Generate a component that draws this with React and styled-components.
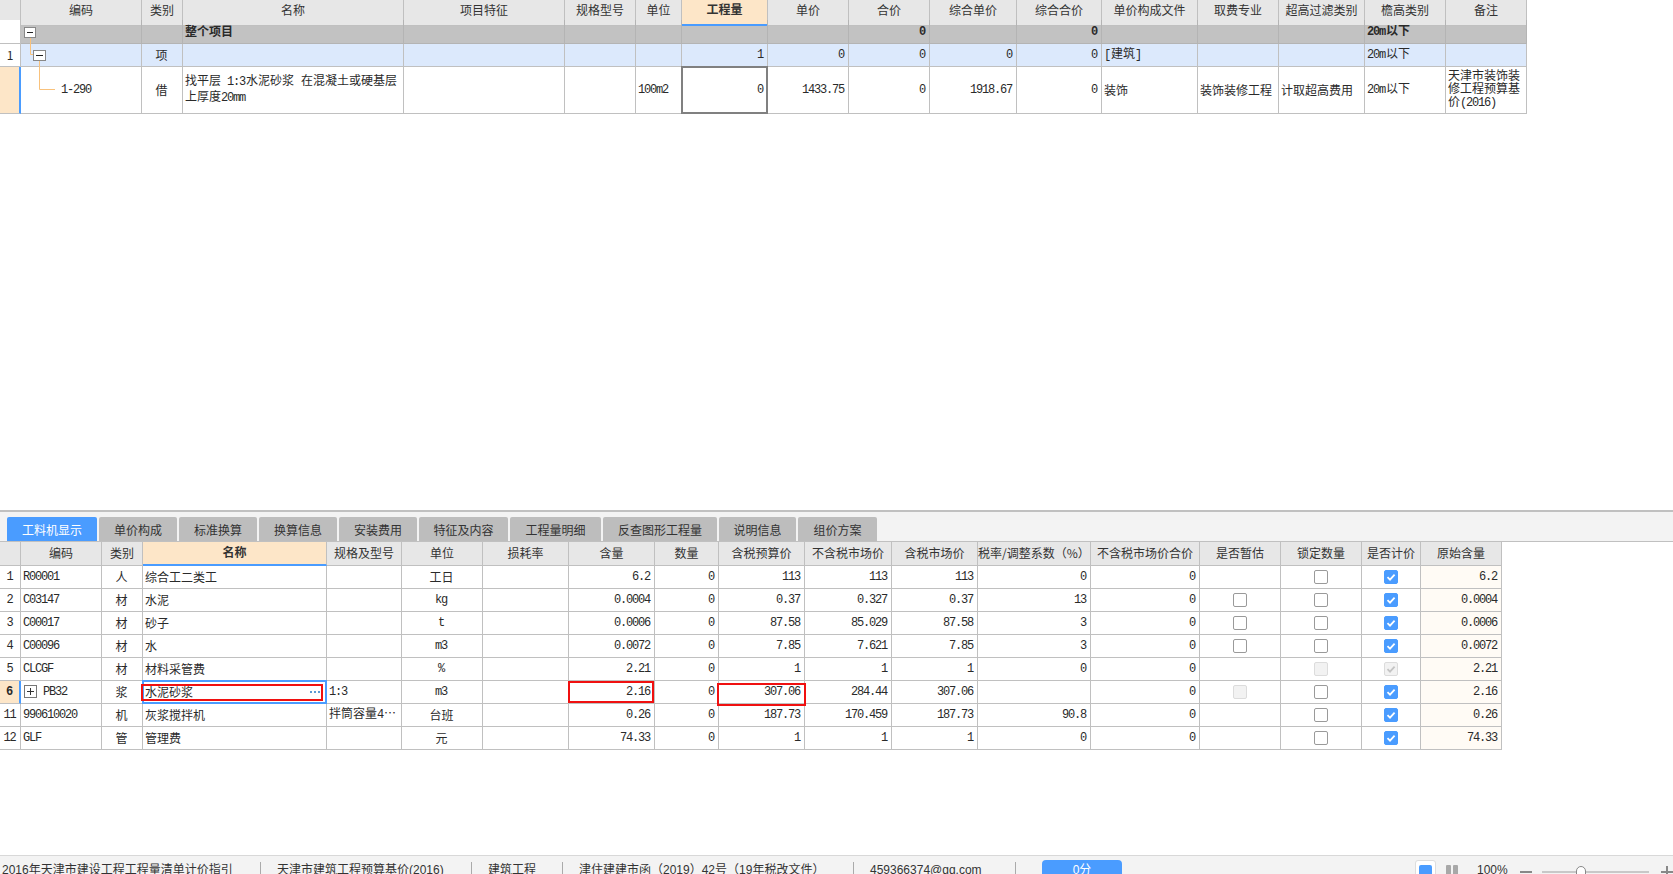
import React from "react";
import styled, { createGlobalStyle } from "styled-components";

const GlobalStyle = createGlobalStyle`
  html, body {
    margin: 0;
    padding: 0;
    background: #fff;
  }
  * {
    box-sizing: border-box;
  }
`;

const LINE = "#c0c0c0";
const BLUE = "#4a9cff";
const PEACH = "#fde6c8";

const Page = styled.div`
  width: 1673px;
  height: 874px;
  overflow: hidden;
  display: flex;
  flex-direction: column;
  font-family: "Noto Sans CJK SC", sans-serif;
  font-size: 12px;
  color: #2a2a2a;
`;

const TopPane = styled.div`
  height: 510px;
  flex: none;
  position: relative;
`;

const Grid = styled.div`
  width: ${(p) => p.$width}px;
  position: relative;
`;

const Row = styled.div`
  display: grid;
  grid-template-columns: ${(p) => p.$cols};
  height: ${(p) => p.$h}px;
  background: ${(p) => p.$bg || "#fff"};
  font-weight: ${(p) => (p.$bold ? 700 : 400)};
`;

const HeadCell = styled.div`
  display: flex;
  align-items: center;
  justify-content: center;
  white-space: nowrap;
  padding-bottom: ${(p) => p.$lift || 2}px;
  background: ${(p) => (p.$active ? PEACH : "#e7e7e7")};
  border-right: 1px solid ${LINE};
  border-bottom: ${(p) => (p.$active ? `2px solid ${BLUE}` : `1px solid ${LINE}`)};
  font-weight: ${(p) => (p.$active ? 700 : 400)};
  color: #333;
`;

const Cell = styled.div`
  position: relative;
  display: flex;
  align-items: center;
  justify-content: ${(p) =>
    p.$align === "right" ? "flex-end" : p.$align === "center" ? "center" : "flex-start"};
  text-align: left;
  line-height: 13px;
  padding: 0 3px 2px ${(p) => p.$indent || 2}px;
  background: ${(p) => p.$bg || "transparent"};
  border-right: 1px solid ${(p) => p.$line || LINE};
  border-bottom: 1px solid ${(p) => p.$line || LINE};
`;

const RowNum = styled(Cell)`
  justify-content: center;
  padding: 0 0 2px;
  background: ${(p) => (p.$active ? PEACH : "#fff")};
  font-weight: ${(p) => (p.$active ? 700 : 400)};
  ${(p) => p.$active && `border-right: 2px solid ${BLUE};`}
`;

const Latin = styled.span`
  font-family: "Liberation Mono", monospace;
  letter-spacing: -1.2px;
  padding-right: 1px;
`;

const SelectedBox = styled.div`
  position: absolute;
  top: -1px;
  left: -1px;
  right: -1px;
  bottom: -1px;
  border: 2px solid #808080;
  pointer-events: none;
`;

const BlueBox = styled.div`
  position: absolute;
  top: -1px;
  left: -1px;
  right: -1px;
  bottom: -1px;
  border: 2px solid ${BLUE};
  pointer-events: none;
`;

const RedMark = styled.div`
  position: absolute;
  inset: ${(p) => p.$inset};
  border: 2px solid #f01010;
  pointer-events: none;
  z-index: 2;
`;

const Dots = styled.span`
  position: absolute;
  right: 6px;
  top: 10px;
  width: 10px;
  height: 2px;
  background: repeating-linear-gradient(90deg, #5b9bd5 0 2px, transparent 2px 4px);
  z-index: 3;
`;

const PlusBox = styled.span`
  width: 13px;
  height: 13px;
  margin: 0 6px 0 1px;
  flex: none;
  border: 1px solid #777;
  position: relative;
  &::before {
    content: "";
    position: absolute;
    left: 2px;
    right: 2px;
    top: 5px;
    height: 1px;
    background: #333;
  }
  &::after {
    content: "";
    position: absolute;
    top: 2px;
    bottom: 2px;
    left: 5px;
    width: 1px;
    background: #333;
  }
`;

const TreeOverlay = styled.svg`
  position: absolute;
  left: 0;
  top: 0;
  pointer-events: none;
`;

const Check = styled.span`
  width: 14px;
  height: 14px;
  flex: none;
  border-radius: 2px;
  display: flex;
  align-items: center;
  justify-content: center;
  background: ${(p) => (p.$state === "on" ? BLUE : p.$state === "off" ? "#fff" : "#f2f2f2")};
  border: 1px solid
    ${(p) => (p.$state === "on" ? BLUE : p.$state === "off" ? "#9a9a9a" : "#dcdcdc")};
  margin-top: 2px;
`;

const Separator = styled.div`
  height: 2px;
  flex: none;
  background: ${LINE};
`;

const TabBar = styled.div`
  height: 30px;
  flex: none;
  display: flex;
  align-items: flex-end;
  gap: 2px;
  padding-left: 7px;
  background: #f3f3f3;
  border-bottom: 1px solid ${LINE};
`;

const Tab = styled.div`
  width: ${(p) => p.$w}px;
  height: 24px;
  display: flex;
  align-items: center;
  justify-content: center;
  border-radius: 2px 2px 0 0;
  background: ${(p) => (p.$active ? BLUE : "#bdbdbd")};
  color: ${(p) => (p.$active ? "#fff" : "#333")};
`;

const Filler = styled.div`
  flex: 1;
`;

const StatusBar = styled.div`
  height: 19px;
  flex: none;
  display: flex;
  background: #f3f3f3;
  border-top: 1px solid #d8d8d8;
  overflow: hidden;
  font-family: "Liberation Sans", "Noto Sans CJK SC", sans-serif;
  color: #333;
`;

const StatusItem = styled.div`
  width: ${(p) => p.$w}px;
  flex: none;
  height: 12px;
  margin-top: 6px;
  padding-left: ${(p) => (p.$first ? 2 : 16)}px;
  border-left: ${(p) => (p.$first ? "none" : "1px solid #aaa")};
  line-height: 17px;
  white-space: nowrap;
`;

const StatusEnd = styled.div`
  width: 1px;
  height: 12px;
  flex: none;
  margin-top: 6px;
  background: #aaa;
`;

const ScoreButton = styled.div`
  width: 80px;
  height: 24px;
  flex: none;
  margin: 4px 0 0 26px;
  border-radius: 4px 4px 0 0;
  background: ${BLUE};
  color: #fff;
  text-align: center;
  line-height: 20px;
`;

const ViewToggle = styled.div`
  width: 21px;
  height: 24px;
  flex: none;
  margin-top: 4px;
  padding: 4px 3px;
  background: #fff;
  border: 1px solid #ddd;
  border-radius: 3px;
`;

const ViewBlue = styled.div`
  height: 9px;
  background: ${BLUE};
  border-radius: 2px 2px 0 0;
`;

const ViewBars = styled.div`
  display: flex;
  gap: 2px;
  width: 12px;
  height: 20px;
  flex: none;
  margin: 9px 0 0 10px;
  &::before,
  &::after {
    content: "";
    flex: 1;
    background: #a8a8a8;
    border-radius: 1px;
  }
`;

const Zoom = styled.div`
  width: 32px;
  flex: none;
  margin: 6px 0 0 19px;
  line-height: 17px;
`;

const ZoomMinus = styled.div`
  width: 12px;
  height: 2px;
  flex: none;
  margin: 15px 0 0 11px;
  background: #888;
`;

const Slider = styled.div`
  width: 107px;
  height: 2px;
  flex: none;
  margin: 15px 0 0 10px;
  background: #c8c8c8;
  position: relative;
`;

const SliderThumb = styled.div`
  position: absolute;
  left: 34px;
  top: -5px;
  width: 10px;
  height: 16px;
  border-radius: 5px;
  background: #fff;
  border: 1px solid #888;
`;

const ZoomPlus = styled.div`
  width: 12px;
  height: 12px;
  flex: none;
  margin: 10px 0 0 12px;
  position: relative;
  &::before {
    content: "";
    position: absolute;
    left: 0;
    right: 0;
    top: 5px;
    height: 2px;
    background: #888;
  }
  &::after {
    content: "";
    position: absolute;
    top: 0;
    bottom: 0;
    left: 5px;
    width: 2px;
    background: #888;
  }
`;

// half-width runs are set apart so digits keep the narrow spreadsheet look
const Txt = ({ children }) => {
  if (children === undefined || children === null || children === "") return null;
  const parts = String(children).split(/([\x20-\x7e]+)/).filter(Boolean);
  return (
    <span>
      {parts.map((part, i) =>
        /^[\x20-\x7e]+$/.test(part) ? <Latin key={i}>{part}</Latin> : part
      )}
    </span>
  );
};

const CheckBox = ({ state }) => (
  <Check $state={state}>
    {(state === "on" || state === "dison") && (
      <svg width="10" height="10" viewBox="0 0 10 10">
        <path
          d="M1.5 5.2 L4 7.6 L8.6 2.6"
          fill="none"
          stroke={state === "on" ? "#fff" : "#c4c4c4"}
          strokeWidth="1.8"
        />
      </svg>
    )}
  </Check>
);

const TOP_COLS = "21px 121px 41px 221px 161px 71px 46px 86px 81px 81px 87px 85px 96px 81px 86px 81px 81px";
const TOP_HEAD = ["", "编码", "类别", "名称", "项目特征", "规格型号", "单位", "工程量", "单价", "合价", "综合单价", "综合合价", "单价构成文件", "取费专业", "超高过滤类别", "檐高类别", "备注"];
const TOP_ALIGN = ["", "left", "center", "left", "left", "left", "left", "right", "right", "right", "right", "right", "left", "left", "left", "left", "left"];

const topRows = [
  { h: 24, bg: "#c2c2c2", bold: true, line: "#b4b4b4", cells: ["", "", "", "整个项目", "", "", "", "", "", "0", "", "0", "", "", "", "20m以下", ""] },
  { h: 23, bg: "#dce9fc", cells: ["1", "", "项", "", "", "", "", "1", "0", "0", "0", "0", "[建筑]", "", "", "20m以下", ""] },
  {
    h: 47,
    active: true,
    cells: ["", "1-290", "借", "找平层 1:3水泥砂浆 在混凝土或硬基层上厚度20mm", "", "", "100m2", "0", "1433.75", "0", "1918.67", "0", "装饰", "装饰装修工程", "计取超高费用", "20m以下", "天津市装饰装修工程预算基价(2016)"],
  },
];

const BOTTOM_COLS = "21px 81px 41px 184px 75px 81px 86px 86px 64px 86px 87px 86px 113px 109px 81px 81px 59px 81px";
const BOTTOM_HEAD = ["", "编码", "类别", "名称", "规格及型号", "单位", "损耗率", "含量", "数量", "含税预算价", "不含税市场价", "含税市场价", "税率/调整系数（%）", "不含税市场价合价", "是否暂估", "锁定数量", "是否计价", "原始含量"];
const BOTTOM_ALIGN = ["", "left", "center", "left", "left", "center", "right", "right", "right", "right", "right", "right", "right", "right", "center", "center", "center", "right"];

const bottomRows = [
  ["1", "R00001", "人", "综合工二类工", "", "工日", "", "6.2", "0", "113", "113", "113", "0", "0", "", "off", "on", "6.2"],
  ["2", "C03147", "材", "水泥", "", "kg", "", "0.0004", "0", "0.37", "0.327", "0.37", "13", "0", "off", "off", "on", "0.0004"],
  ["3", "C00017", "材", "砂子", "", "t", "", "0.0006", "0", "87.58", "85.029", "87.58", "3", "0", "off", "off", "on", "0.0006"],
  ["4", "C00096", "材", "水", "", "m3", "", "0.0072", "0", "7.85", "7.621", "7.85", "3", "0", "off", "off", "on", "0.0072"],
  ["5", "CLCGF", "材", "材料采管费", "", "%", "", "2.21", "0", "1", "1", "1", "0", "0", "", "dis", "dison", "2.21"],
  ["6", "PB32", "浆", "水泥砂浆", "1:3", "m3", "", "2.16", "0", "307.06", "284.44", "307.06", "", "0", "dis", "off", "on", "2.16"],
  ["11", "990610020", "机", "灰浆搅拌机", "拌筒容量4…", "台班", "", "0.26", "0", "187.73", "170.459", "187.73", "90.8", "0", "", "off", "on", "0.26"],
  ["12", "GLF", "管", "管理费", "", "元", "", "74.33", "0", "1", "1", "1", "0", "0", "", "off", "on", "74.33"],
];

const TABS = [
  ["工料机显示", 90],
  ["单价构成", 78],
  ["标准换算", 78],
  ["换算信息", 78],
  ["安装费用", 78],
  ["特征及内容", 89],
  ["工程量明细", 91],
  ["反查图形工程量", 114],
  ["说明信息", 77],
  ["组价方案", 79],
];

const TopTable = () => (
  <Grid $width={1526}>
    <Row $cols={TOP_COLS} $h={20}>
      {TOP_HEAD.map((label, i) => (
        <HeadCell key={i} $lift={7} $active={label === "工程量"}>{label}</HeadCell>
      ))}
    </Row>
    {topRows.map((row, r) => (
      <Row key={r} $cols={TOP_COLS} $h={row.h} $bg={row.bg} $bold={row.bold}>
        {row.cells.map((value, i) =>
          i === 0 ? (
            <RowNum key={i} $active={row.active} style={{ fontWeight: 400 }}>
              {value}
            </RowNum>
          ) : (
            <Cell
              key={i}
              $align={TOP_ALIGN[i]}
              $line={row.line}
              $indent={i === 1 ? 40 : 2}
            >
              <Txt>{value}</Txt>
              {row.active && TOP_HEAD[i] === "工程量" && <SelectedBox />}
            </Cell>
          )
        )}
      </Row>
    ))}
    <TreeOverlay width="70" height="114">
      <path d="M30.5 37 V54.5 H34 M39.5 61 V89.5 H55" fill="none" stroke="#f9c27c" />
      <rect x="24.5" y="27.5" width="11" height="10" fill="#fff" stroke="#888" />
      <path d="M27 32.5 H33" stroke="#222" />
      <rect x="33.5" y="50.5" width="12" height="10" fill="#fff" stroke="#888" />
      <path d="M36 55.5 H43" stroke="#222" />
    </TreeOverlay>
  </Grid>
);

const BottomTable = () => (
  <Grid $width={1502}>
    <Row $cols={BOTTOM_COLS} $h={24}>
      {BOTTOM_HEAD.map((label, i) => (
        <HeadCell key={i} $lift={3} $active={label === "名称"}>{label}</HeadCell>
      ))}
    </Row>
    {bottomRows.map((row) => {
      const isCurrent = row[0] === "6";
      return (
        <Row key={row[0]} $cols={BOTTOM_COLS} $h={23}>
          {row.map((value, i) => {
            if (i === 0) {
              return <RowNum key={i} $active={isCurrent}><Txt>{value}</Txt></RowNum>;
            }
            const isCheck = BOTTOM_HEAD[i].startsWith("是否") || BOTTOM_HEAD[i] === "锁定数量";
            return (
              <Cell
                key={i}
                $align={BOTTOM_ALIGN[i]}
                $bg={i === 17 ? "#fffbf5" : undefined}
              >
                {isCheck ? (
                  value && <CheckBox state={value} />
                ) : (
                  <>
                    {isCurrent && i === 1 && <PlusBox />}
                    <Txt>{value}</Txt>
                  </>
                )}
                {isCurrent && i === 3 && (
                  <>
                    <BlueBox />
                    <Dots />
                    <RedMark $inset="3px 3px 2px -2px" />
                  </>
                )}
                {isCurrent && i === 7 && <RedMark $inset="0 0 0 -1px" />}
                {isCurrent && i === 9 && <RedMark $inset="2px -2px -3px -2px" />}
              </Cell>
            );
          })}
        </Row>
      );
    })}
  </Grid>
);

const App = () => (
  <>
    <GlobalStyle />
    <Page>
      <TopPane>
        <TopTable />
      </TopPane>
      <Separator />
      <TabBar>
        {TABS.map(([label, w], i) => (
          <Tab key={label} $w={w} $active={i === 0}>{label}</Tab>
        ))}
      </TabBar>
      <BottomTable />
      <Filler />
      <StatusBar>
        <StatusItem $first $w={260}>2016年天津市建设工程工程量清单计价指引</StatusItem>
        <StatusItem $w={211}>天津市建筑工程预算基价(2016)</StatusItem>
        <StatusItem $w={91}>建筑工程</StatusItem>
        <StatusItem $w={291}>津住建建市函（2019）42号（19年税改文件）</StatusItem>
        <StatusItem $w={162}>459366374@qq.com</StatusItem>
        <StatusEnd />
        <ScoreButton>0分</ScoreButton>
        <Filler />
        <ViewToggle><ViewBlue /></ViewToggle>
        <ViewBars />
        <Zoom>100%</Zoom>
        <ZoomMinus />
        <Slider><SliderThumb /></Slider>
        <ZoomPlus />
      </StatusBar>
    </Page>
  </>
);

export default App;
